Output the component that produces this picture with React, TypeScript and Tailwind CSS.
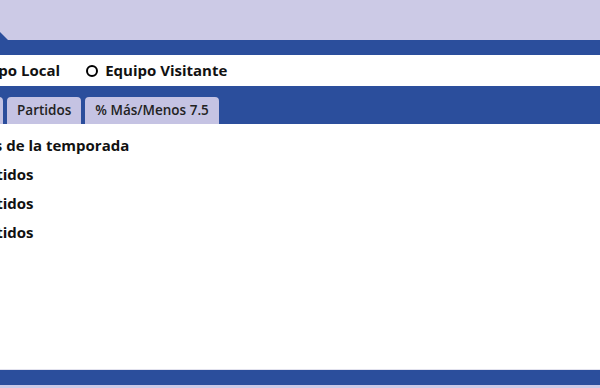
export default function App() {
  const lines = [
    "Estadísticas de la temporada",
    "Últimos 5 partidos",
    "Últimos 6 partidos",
    "Últimos 8 partidos",
  ];

  return (
    <div className="flex h-[388px] w-[600px] flex-col overflow-hidden bg-white font-['Open_Sans',sans-serif] text-[#111]">
      <div className="relative h-[40px] shrink-0 bg-[#cccae6]">
        <svg className="absolute bottom-0 left-0" width="8" height="8" viewBox="0 0 8 8">
          <polygon points="0,0 8,8 0,8" fill="#2b4e9c" />
        </svg>
      </div>
      <div className="h-[15px] shrink-0 bg-[#2b4e9c]" />

      <div className="flex h-[31px] shrink-0 items-center gap-[26px] text-[15px] font-bold">
        <label className="-ml-[53px] flex items-center gap-[7px]">
          <span className="h-[12px] w-[12px] rounded-full border-2 border-black bg-[#2b4e9c]" />
          <span>Equipo Local</span>
        </label>
        <label className="flex items-center gap-[7px]">
          <span className="h-[12px] w-[12px] rounded-full border-2 border-black" />
          <span>Equipo Visitante</span>
        </label>
      </div>

      <div className="flex h-[38px] shrink-0 items-end gap-[4px] bg-[#2b4e9c]">
        <button className="-ml-[67px] h-[27px] w-[70px] rounded-t-[4px] bg-[#c5c3e3] text-[13.5px] font-semibold text-[#222]">
          General
        </button>
        <button className="h-[27px] rounded-t-[4px] bg-[#c5c3e3] px-[10px] text-[13.5px] font-semibold text-[#222]">
          Partidos
        </button>
        <button className="h-[27px] rounded-t-[4px] bg-[#c5c3e3] px-[10px] text-[13.5px] font-semibold text-[#222]">
          % Más/Menos 7.5
        </button>
      </div>

      <div className="flex flex-1 flex-col gap-[9px] pt-[11px] text-[15px] font-bold">
        {lines.map((t, i) => (
          <div key={i} className={i === 0 ? "-ml-[86px] h-[20px] leading-[20px]" : "-ml-[104px] h-[20px] leading-[20px]"}>
            {t}
          </div>
        ))}
      </div>

      <div className="h-[1px] shrink-0 bg-[#e2e2ee]" />
      <div className="h-[15px] shrink-0 bg-[#2b4e9c]" />
      <div className="h-[3px] shrink-0 bg-[#cccae6]" />
    </div>
  );
}
